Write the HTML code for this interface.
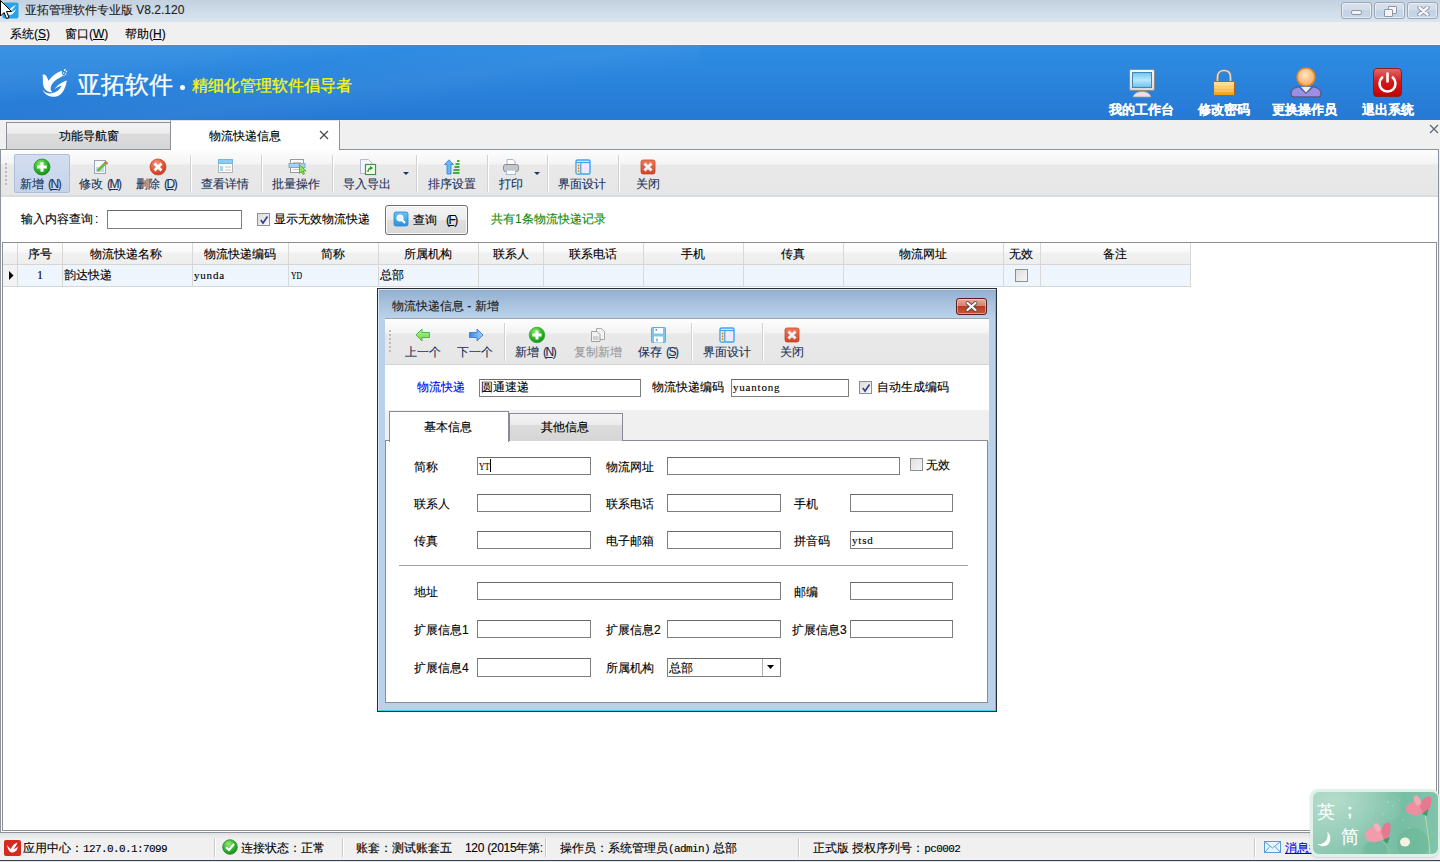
<!DOCTYPE html>
<html><head><meta charset="utf-8">
<style>
*{box-sizing:border-box;margin:0;padding:0}
html,body{width:1440px;height:862px;overflow:hidden;background:#f0f0f0;font-family:"Liberation Sans",sans-serif;font-size:12px;color:#000}
.a{position:absolute}
.t{position:absolute;white-space:nowrap;line-height:12px;font-size:12px;-webkit-text-stroke:0.12px currentColor}
#titlebar{left:0;top:0;width:1440px;height:22px;background:linear-gradient(#c3d1e0,#d9e5f1)}
#menubar{left:0;top:22px;width:1440px;height:23px;background:#f0f0f0}
#banner{left:0;top:45px;width:1440px;height:75px;background:linear-gradient(#2e8de3,#2679d4)}
#tabstrip{left:0;top:120px;width:1440px;height:30px;background:#f0f0f0}
#panel{left:0;top:149px;width:1439px;height:684px;border:1px solid #8e949c;border-top:1px solid #8e949c;background:#fff}
#toolbar{left:1px;top:150px;width:1437px;height:47px;background:linear-gradient(#fdfdfd 0,#f4f4f4 14px,#e9e9e9 15px,#e6e6e6 100%);border-bottom:2px solid #dadde0}
#grid{left:2px;top:242px;width:1435px;height:589px;border:1px solid #8f8f8f;background:#fff}
#status{left:0;top:833px;width:1440px;height:27px;background:linear-gradient(#e2e2e2,#f0f0f0 6px,#f0f0f0)}
#taskbar{left:0;top:860px;width:1440px;height:2px;background:linear-gradient(#3b4250 0,#3b4250 1px,#d8e4ef 1px)}
.wb{position:absolute;width:31px;height:17px;border:1px solid #9ba6b7;border-radius:3px;background:linear-gradient(#d6dfea 0,#d3dde9 45%,#c4d4e6 46%,#c6d6e8 100%);box-shadow:inset 0 0 0 1px rgba(255,255,255,.5)}
.bl{font-size:13px;line-height:13px;font-weight:bold;color:#fff}
.sep{position:absolute;width:1px;height:37px;background:#cfd2d6;box-shadow:1px 0 0 #fff}
.tb{color:#17325a}
.pn{margin-left:4px;letter-spacing:-1.5px;font-size:12px}
.inp{background:#fff;border:1px solid #7e7e7e;border-top-color:#6a6a6a}
.cb{position:absolute;width:13px;height:13px;border:1px solid #8e8f8f;background:linear-gradient(135deg,#dcdcdc,#f8f8f8)}
.gh{color:#000}
.mono{font-family:"Liberation Mono",monospace;font-size:11px;letter-spacing:-0.6px}
.ssep{position:absolute;top:838px;width:1px;height:19px;background:#c9c9c9;box-shadow:1px 0 0 #fff}
.ser{font-family:"Liberation Serif",serif;font-size:11px;letter-spacing:0.8px}
</style></head><body>
<div id="titlebar" class="a"></div>
<div id="menubar" class="a"></div><div class="a" style="left:0;top:44px;width:1440px;height:1px;background:#fbf7f2"></div>
<div id="banner" class="a"><div class="a" style="left:0;top:0;width:700px;height:75px;background:linear-gradient(172deg,rgba(255,255,255,0.05) 0,rgba(255,255,255,0.05) 20%,rgba(255,255,255,0) 35%,rgba(255,255,255,0.04) 55%,rgba(255,255,255,0) 70%)"></div></div>
<div id="tabstrip" class="a"></div>
<div id="panel" class="a"></div>
<div id="toolbar" class="a"></div>
<div id="grid" class="a"></div>
<div id="status" class="a"></div>
<div id="taskbar" class="a"></div>
<!-- TITLE BAR -->
<svg class="a" style="left:2px;top:2px" width="17" height="17" viewBox="0 0 17 17">
<rect x="0.5" y="0.5" width="16" height="16" rx="2" fill="#2aa2e6"/>
<path d="M3 7 C4 11 6 13 9 13 C11 12 13 10 14 7 C12 9 10 10 8 10 C10 8 12 6 14 3 C11 4 8 6 6 10 C5 9 4 8 3 7Z" fill="#fff" opacity="0.9"/>
</svg>
<svg class="a" style="left:0;top:0" width="13" height="20" viewBox="0 0 13 20">
<path d="M0.5 0.5 L0.5 16 L4 12.5 L6.5 18.5 L9 17.5 L6.5 11.5 L11.5 11.5 Z" fill="#fff" stroke="#000" stroke-width="1"/>
</svg>
<div class="t" style="left:25px;top:4px;color:#222;font-size:12px">亚拓管理软件专业版 V8.2.120</div>
<!-- window buttons -->
<div class="a wb" style="left:1341px;top:2px"><div class="a" style="left:9px;top:7px;width:11px;height:5px;background:#f4f4f4;border:1px solid #8c97a8;border-radius:2px"></div></div>
<div class="a wb" style="left:1374px;top:2px">
 <div class="a" style="left:13px;top:3px;width:9px;height:8px;background:#f4f4f4;border:1px solid #8c97a8;border-radius:1px"></div>
 <div class="a" style="left:9px;top:6px;width:9px;height:8px;background:#f4f4f4;border:1px solid #8c97a8;border-radius:1px"></div>
</div>
<div class="a wb" style="left:1407px;top:2px">
 <svg class="a" style="left:9px;top:3px" width="13" height="10" viewBox="0 0 13 10"><path d="M2.5 1.5 L10.5 8.5 M10.5 1.5 L2.5 8.5" stroke="#8c97a8" stroke-width="4.4" stroke-linecap="round"/><path d="M2.5 1.5 L10.5 8.5 M10.5 1.5 L2.5 8.5" stroke="#f6f6f6" stroke-width="2.6" stroke-linecap="round"/></svg>
</div>
<!-- MENU -->
<div class="t" style="left:10px;top:28px">系统(<u>S</u>)</div>
<div class="t" style="left:65px;top:28px">窗口(<u>W</u>)</div>
<div class="t" style="left:125px;top:28px">帮助(<u>H</u>)</div>

<!-- BANNER -->
<svg class="a" style="left:38px;top:64px" width="34" height="36" viewBox="0 0 34 36">
<path d="M4.6 11 C6 10 7.6 10.6 8.6 12.6 L10.6 16.8 C14 12 18 8.8 23.8 6.8 L24.2 12.6 C18.5 15 13.8 19 12.8 23 C12.2 25.5 13 27 14.5 28.2 C10 28.6 6.2 26 5.2 21 C4.6 17 5.2 13 4.6 11 Z" fill="#fff"/>
<path d="M4.4 25.2 C6 30 11 33.2 17 32.8 C23.5 32.2 27.6 25 28.8 16.4 C25 17.6 19.5 20.5 16.2 25.4 C19 23 22 21.6 23.4 22 C21.5 26.5 16.5 29.6 11.2 29.4 C8.2 29.2 6 27.6 4.4 25.2 Z" fill="#fff"/>
<circle cx="26.8" cy="6" r="0.9" fill="#fff"/><circle cx="28.4" cy="7.6" r="0.8" fill="#fff"/><circle cx="27.6" cy="10" r="0.8" fill="#fff"/><circle cx="25.6" cy="9" r="0.8" fill="#fff"/><circle cx="24.4" cy="11.2" r="0.7" fill="#fff"/><circle cx="26" cy="11.6" r="0.6" fill="#fff"/>
</svg>
<div class="t" style="left:77px;top:73px;font-size:24px;line-height:24px;color:#fff;font-weight:500;-webkit-text-stroke:0.3px #fff">亚拓软件</div>
<div class="a" style="left:180px;top:85px;width:5px;height:5px;border-radius:50%;background:#fff"></div>
<div class="t" style="left:192px;top:78px;font-size:16px;line-height:16px;color:#f8f800;-webkit-text-stroke:0.3px #f8f800">精细化管理软件倡导者</div>
<!-- monitor icon -->
<svg class="a" style="left:1128px;top:68px" width="28" height="30" viewBox="0 0 28 30">
<defs><linearGradient id="scr" x1="0" y1="0" x2="0" y2="1"><stop offset="0" stop-color="#6ec3f0"/><stop offset="0.5" stop-color="#b8e8fc"/><stop offset="1" stop-color="#6cc0ee"/></linearGradient>
<linearGradient id="frm" x1="0" y1="0" x2="0" y2="1"><stop offset="0" stop-color="#fafafa"/><stop offset="1" stop-color="#d8d8d8"/></linearGradient></defs>
<path d="M5 29 C6 25 10 23.5 14 23.5 C18 23.5 22 25 23 29 Z" fill="#e4e4e4" stroke="#9a9a9a" stroke-width="0.8"/>
<rect x="1.5" y="1.5" width="25" height="21" rx="1.5" fill="url(#frm)" stroke="#8d8d8d" stroke-width="1"/>
<rect x="4.5" y="4.5" width="19" height="15" fill="url(#scr)" stroke="#3f86b8" stroke-width="1"/>
</svg>
<!-- lock icon -->
<svg class="a" style="left:1212px;top:69px" width="24" height="28" viewBox="0 0 24 28">
<defs><linearGradient id="lk" x1="0" y1="0" x2="0" y2="1"><stop offset="0" stop-color="#ffe7a8"/><stop offset="0.5" stop-color="#ffc34a"/><stop offset="1" stop-color="#f39a10"/></linearGradient></defs>
<path d="M5.5 12 L5.5 8 C5.5 3.5 8.5 1.5 12 1.5 C15.5 1.5 18.5 3.5 18.5 8 L18.5 12" fill="none" stroke="#7b7b7b" stroke-width="3.2"/>
<path d="M5.5 12 L5.5 8 C5.5 3.5 8.5 1.5 12 1.5 C15.5 1.5 18.5 3.5 18.5 8 L18.5 12" fill="none" stroke="#dcdcdc" stroke-width="1.6"/>
<rect x="1.5" y="12.5" width="21" height="14" rx="1" fill="url(#lk)" stroke="#b0641a" stroke-width="1"/>
<path d="M3 16 H21 M3 19 H21 M3 22 H21" stroke="#ffe9b8" stroke-width="0.7" opacity="0.8"/>
</svg>
<!-- user icon -->
<svg class="a" style="left:1289px;top:66px" width="34" height="32" viewBox="0 0 34 32">
<defs><radialGradient id="hd" cx="0.45" cy="0.4" r="0.6"><stop offset="0" stop-color="#ffe6c6"/><stop offset="1" stop-color="#f8a85c"/></radialGradient></defs>
<path d="M2 28 C2 23 5 21.5 10 20.5 L17 27 L24 20.5 C29 21.5 32 23 32 28 C32 30 31 31 29 31 L5 31 C3 31 2 30 2 28 Z" fill="#9a8ee6" stroke="#5e5a86" stroke-width="1.4"/>
<path d="M12 21 L17 26.5 L22 21 Z" fill="#f0f0f0"/>
<circle cx="17" cy="11" r="9" fill="url(#hd)" stroke="#e0872a" stroke-width="1.6"/>
</svg>
<!-- power icon -->
<svg class="a" style="left:1372px;top:67px" width="31" height="31" viewBox="0 0 31 31">
<defs><linearGradient id="pw" x1="0" y1="0" x2="0" y2="1"><stop offset="0" stop-color="#e56a6a"/><stop offset="0.45" stop-color="#d41c1c"/><stop offset="1" stop-color="#c40000"/></linearGradient></defs>
<rect x="1.5" y="1.5" width="28" height="28" rx="3.5" fill="url(#pw)" stroke="#8a2020" stroke-width="1"/>
<path d="M10.2 10.5 A8 8 0 1 0 20.8 10.5" fill="none" stroke="#fff" stroke-width="2.6" stroke-linecap="round"/>
<path d="M15.5 6.5 V14.5" stroke="#fff" stroke-width="2.6" stroke-linecap="round"/>
</svg>
<div class="t bl" style="left:1109px;top:103px">我的工作台</div>
<div class="t bl" style="left:1198px;top:103px">修改密码</div>
<div class="t bl" style="left:1272px;top:103px">更换操作员</div>
<div class="t bl" style="left:1362px;top:103px">退出系统</div>

<!-- TABS -->
<div class="a" style="left:6px;top:122px;width:165px;height:27px;border:1px solid #8b8f97;border-bottom:none;background:linear-gradient(#f3f3f3 0,#ececec 40%,#dcdcdc 41%,#d6d6d6 100%)"></div>
<div class="t" style="left:59px;top:130px">功能导航窗</div>
<div class="a" style="left:170px;top:120px;width:170px;height:30px;border:1px solid #8b8f97;border-top:1px solid #dfe3e8;border-bottom:none;background:#fff"></div>
<div class="t" style="left:209px;top:130px">物流快递信息</div>
<svg class="a" style="left:319px;top:130px" width="10" height="10" viewBox="0 0 10 10"><path d="M1 1 L9 9 M9 1 L1 9" stroke="#4a4a4a" stroke-width="1.2"/></svg>
<svg class="a" style="left:1429px;top:124px" width="10" height="10" viewBox="0 0 10 10"><path d="M1 1 L9 9 M9 1 L1 9" stroke="#5b6778" stroke-width="1.2"/></svg>
<!-- TOOLBAR -->
<div class="a" style="left:5px;top:163px;width:2px;height:23px;background:repeating-linear-gradient(#b8bcc2 0,#b8bcc2 2px,transparent 2px,transparent 4px)"></div>
<div class="a" style="left:14px;top:154px;width:56px;height:39px;border:1px solid #aac0dc;border-radius:2px;background:linear-gradient(#d3deef,#c5d3ea)"></div>
<div class="sep" style="left:190px;top:155px"></div>
<div class="sep" style="left:261px;top:155px"></div>
<div class="sep" style="left:332px;top:155px"></div>
<div class="sep" style="left:416px;top:155px"></div>
<div class="sep" style="left:487px;top:155px"></div>
<div class="sep" style="left:547px;top:155px"></div>
<div class="sep" style="left:618px;top:155px"></div>
<!-- icons -->
<svg class="a" style="left:33px;top:158px" width="18" height="18" viewBox="0 0 18 18">
<defs><radialGradient id="gp" cx="0.4" cy="0.3" r="0.7"><stop offset="0" stop-color="#8ee86a"/><stop offset="0.6" stop-color="#2fb52c"/><stop offset="1" stop-color="#1b8f1b"/></radialGradient></defs>
<circle cx="9" cy="9" r="8" fill="url(#gp)" stroke="#1f8a1f" stroke-width="0.8"/>
<path d="M9 4.2 V13.8 M4.2 9 H13.8" stroke="#fff" stroke-width="3"/>
</svg>
<svg class="a" style="left:93px;top:159px" width="16" height="16" viewBox="0 0 16 16">
<rect x="1.5" y="1.5" width="11" height="13" fill="#fbfbfd" stroke="#9aa4b8" stroke-width="1"/>
<rect x="3" y="8" width="8" height="5" fill="#c9d6ef"/>
<path d="M4.5 12 L13 3.5" stroke="#5fbf3a" stroke-width="2.6"/>
<path d="M12 2.5 L14.5 5" stroke="#e46a50" stroke-width="2.4"/>
</svg>
<svg class="a" style="left:149px;top:158px" width="18" height="18" viewBox="0 0 18 18">
<defs><radialGradient id="rd" cx="0.4" cy="0.3" r="0.7"><stop offset="0" stop-color="#f7a08a"/><stop offset="0.6" stop-color="#e5563a"/><stop offset="1" stop-color="#c83a22"/></radialGradient></defs>
<circle cx="9" cy="9" r="8" fill="url(#rd)" stroke="#c84a30" stroke-width="0.8"/>
<path d="M5.5 5.5 L12.5 12.5 M12.5 5.5 L5.5 12.5" stroke="#fff" stroke-width="2.8"/>
</svg>
<svg class="a" style="left:217px;top:158px" width="17" height="16" viewBox="0 0 17 16">
<rect x="1.5" y="1.5" width="14" height="13" fill="#fdfdfd" stroke="#b3b3b3" stroke-width="1"/>
<rect x="1.5" y="1.5" width="14" height="4" fill="#8ccbf5" stroke="#6fb7ea" stroke-width="1"/>
<rect x="3" y="8" width="3" height="5" fill="#a8d3f2"/>
<path d="M8 9 H14 M8 12 H14" stroke="#c3c3c3" stroke-width="1"/>
</svg>
<svg class="a" style="left:288px;top:158px" width="19" height="17" viewBox="0 0 19 17">
<rect x="2.5" y="1.5" width="13" height="13" fill="#fafafa" stroke="#9a9a9a" stroke-width="1"/>
<path d="M5 4.5 H13 M5 11.5 H13" stroke="#c4c4c4" stroke-width="1"/>
<rect x="1" y="5.5" width="16" height="4" fill="#9fd3f7" stroke="#68b3e6" stroke-width="1"/>
<path d="M11.5 6.5 L11.5 15.5 L13.5 13.5 L15 16.5 L16.5 15.8 L15.2 13 L18 13 Z" fill="#8ee15a" stroke="#4aa82a" stroke-width="0.8"/>
</svg>
<svg class="a" style="left:359px;top:158px" width="18" height="18" viewBox="0 0 18 18">
<path d="M1.5 1.5 H9.5 L13 5 V15.5 H1.5 Z" fill="#f4f4fd" stroke="#b5b9d8" stroke-width="1"/>
<rect x="6.5" y="6.5" width="10" height="10" fill="#fafff5" stroke="#3c9a34" stroke-width="1.2"/>
<path d="M9 14 C9 11 10 10 12.5 10 M11 8.5 L13 10 L11 11.5" fill="none" stroke="#3c9a34" stroke-width="1.4"/>
</svg>
<svg class="a" style="left:443px;top:159px" width="18" height="16" viewBox="0 0 18 16">
<path d="M6 0.8 L10.5 5.5 H8 V15 H4 V5.5 H1.5 Z" fill="#6ab8f2" stroke="#2f82d0" stroke-width="0.8"/>
<path d="M10 14 H16.5 M10.5 11 H16.5 M11.5 8 H16.5 M12.5 5 H16.5 M14 2 H16.5" stroke="#3fae3a" stroke-width="2"/>
</svg>
<svg class="a" style="left:502px;top:158px" width="18" height="18" viewBox="0 0 18 18">
<path d="M5 1.5 H11 L13 3.5 V7 H5 Z" fill="#fdfdfd" stroke="#9fb6d6" stroke-width="1"/>
<rect x="1.5" y="6.5" width="15" height="7" rx="2" fill="#c7c7c7" stroke="#8a8a8a" stroke-width="1"/>
<rect x="4.5" y="12" width="9" height="4.5" fill="#fdfdfd" stroke="#a8bcd8" stroke-width="1"/>
</svg>
<svg class="a" style="left:575px;top:159px" width="16" height="16" viewBox="0 0 16 16">
<rect x="1" y="1" width="14" height="14" rx="1.5" fill="#efeaff" stroke="#3aa6ee" stroke-width="1.4"/>
<path d="M1 3.5 H15" stroke="#3aa6ee" stroke-width="1.2"/>
<rect x="1.8" y="4.5" width="3.7" height="9.8" fill="#f9e58a"/>
<path d="M5.8 4 V15" stroke="#3aa6ee" stroke-width="1.2"/>
<circle cx="3.6" cy="6.5" r="0.8" fill="#e85a3a"/><circle cx="3.6" cy="9.3" r="0.8" fill="#e85a3a"/><circle cx="3.6" cy="12" r="0.8" fill="#e85a3a"/>
</svg>
<svg class="a" style="left:640px;top:159px" width="16" height="16" viewBox="0 0 16 16">
<defs><linearGradient id="cx" x1="0" y1="0" x2="0" y2="1"><stop offset="0" stop-color="#f07a5a"/><stop offset="1" stop-color="#d2442a"/></linearGradient></defs>
<rect x="1" y="1" width="14" height="14" rx="2" fill="url(#cx)" stroke="#c0442c" stroke-width="0.8"/>
<path d="M4.5 4.5 L11.5 11.5 M11.5 4.5 L4.5 11.5" stroke="#eef3f5" stroke-width="3"/>
</svg>
<svg class="a" style="left:403px;top:172px" width="6" height="3" viewBox="0 0 6 3"><path d="M0 0 H6 L3 3 Z" fill="#1d3557"/></svg>
<svg class="a" style="left:534px;top:172px" width="6" height="3" viewBox="0 0 6 3"><path d="M0 0 H6 L3 3 Z" fill="#1d3557"/></svg>
<!-- toolbar labels -->
<div class="t tb" style="left:20px;top:178px">新增<span class="pn">(<u>N</u>)</span></div>
<div class="t tb" style="left:79px;top:178px">修改<span class="pn">(<u>M</u>)</span></div>
<div class="t tb" style="left:136px;top:178px">删除<span class="pn">(<u>D</u>)</span></div>
<div class="t tb" style="left:201px;top:178px">查看详情</div>
<div class="t tb" style="left:272px;top:178px">批量操作</div>
<div class="t tb" style="left:343px;top:178px">导入导出</div>
<div class="t tb" style="left:428px;top:178px">排序设置</div>
<div class="t tb" style="left:499px;top:178px">打印</div>
<div class="t tb" style="left:558px;top:178px">界面设计</div>
<div class="t tb" style="left:636px;top:178px">关闭</div>

<!-- SEARCH ROW -->
<div class="t" style="left:21px;top:213px">输入内容查询<span style="margin-left:2px">:</span></div>
<div class="a inp" style="left:107px;top:210px;width:135px;height:19px"></div>
<div class="a cb" style="left:257px;top:213px"><svg class="a" style="left:1px;top:1px" width="10" height="10" viewBox="0 0 10 10"><path d="M1.8 5 L4 8 L8.5 1.5" fill="none" stroke="#2f3f8f" stroke-width="1.6"/></svg></div>
<div class="t" style="left:274px;top:213px">显示无效物流快递</div>
<div class="a" style="left:385px;top:205px;width:83px;height:30px;border:1px solid #707070;border-radius:3px;background:linear-gradient(#f4f4f4 0,#ececec 50%,#dedede 51%,#d8d8d8 100%);box-shadow:inset 0 0 0 1px #fafafa"></div>
<svg class="a" style="left:393px;top:211px" width="16" height="16" viewBox="0 0 16 16">
<defs><linearGradient id="sg" x1="0" y1="0" x2="0" y2="1"><stop offset="0" stop-color="#6cc4f6"/><stop offset="1" stop-color="#2a90dc"/></linearGradient></defs>
<rect x="1" y="1" width="14" height="14" rx="2" fill="url(#sg)" stroke="#2a86d0" stroke-width="0.8"/>
<circle cx="7" cy="7" r="3" fill="#e8f6ff" stroke="#fff" stroke-width="1.2"/>
<path d="M9 9 L12 12" stroke="#fff" stroke-width="2"/>
</svg>
<div class="t" style="left:413px;top:214px">查询<span class="pn" style="margin-left:9px">(<u>F</u>)</span></div>
<div class="t" style="left:491px;top:213px;color:#0a8a0a">共有1条物流快递记录</div>
<!-- GRID -->
<div class="a" style="left:3px;top:243px;width:1188px;height:22px;background:linear-gradient(#fdfdfd 0,#f9f9f9 9px,#f1f1f1 10px,#eeeeee 100%);border-bottom:1px solid #d5d5d5"></div>
<div class="a" style="left:17px;top:265px;width:1174px;height:22px;background:#eef5fd;border-bottom:1px solid #d5d5d5"></div>
<div class="a" style="left:3px;top:265px;width:14px;height:22px;background:#f3f3f3;border-bottom:1px solid #d5d5d5"></div>
<div class="a" style="left:17px;top:243px;width:1px;height:44px;background:#d8d8d8"></div><div class="a" style="left:62px;top:243px;width:1px;height:44px;background:#d8d8d8"></div><div class="a" style="left:192px;top:243px;width:1px;height:44px;background:#d8d8d8"></div><div class="a" style="left:288px;top:243px;width:1px;height:44px;background:#d8d8d8"></div><div class="a" style="left:378px;top:243px;width:1px;height:44px;background:#d8d8d8"></div><div class="a" style="left:478px;top:243px;width:1px;height:44px;background:#d8d8d8"></div><div class="a" style="left:543px;top:243px;width:1px;height:44px;background:#d8d8d8"></div><div class="a" style="left:643px;top:243px;width:1px;height:44px;background:#d8d8d8"></div><div class="a" style="left:743px;top:243px;width:1px;height:44px;background:#d8d8d8"></div><div class="a" style="left:843px;top:243px;width:1px;height:44px;background:#d8d8d8"></div><div class="a" style="left:1003px;top:243px;width:1px;height:44px;background:#d8d8d8"></div><div class="a" style="left:1040px;top:243px;width:1px;height:44px;background:#d8d8d8"></div><div class="a" style="left:1190px;top:243px;width:1px;height:44px;background:#d8d8d8"></div>
<svg class="a" style="left:9px;top:271px" width="5" height="9" viewBox="0 0 5 9"><path d="M0 0 L4.5 4.5 L0 9 Z" fill="#000"/></svg>
<div class="t gh" style="left:28px;top:248px">序号</div>
<div class="t gh" style="left:90px;top:248px">物流快递名称</div>
<div class="t gh" style="left:204px;top:248px">物流快递编码</div>
<div class="t gh" style="left:321px;top:248px">简称</div>
<div class="t gh" style="left:404px;top:248px">所属机构</div>
<div class="t gh" style="left:493px;top:248px">联系人</div>
<div class="t gh" style="left:569px;top:248px">联系电话</div>
<div class="t gh" style="left:681px;top:248px">手机</div>
<div class="t gh" style="left:781px;top:248px">传真</div>
<div class="t gh" style="left:899px;top:248px">物流网址</div>
<div class="t gh" style="left:1009px;top:248px">无效</div>
<div class="t gh" style="left:1103px;top:248px">备注</div>
<div class="t" style="left:37px;top:269px;font-family:'Liberation Serif',serif">1</div>
<div class="t" style="left:64px;top:269px">韵达快递</div>
<div class="t ser" style="left:194px;top:269px">yunda</div>
<div class="t ser" style="left:291px;top:269px;transform:scaleX(0.7);transform-origin:0 0;letter-spacing:0">YD</div>
<div class="t" style="left:380px;top:269px">总部</div>
<div class="a cb" style="left:1015px;top:269px;background:linear-gradient(135deg,#dedede,#f7f7f7)"></div>

<!-- DIALOG -->
<div class="a" style="left:377px;top:288px;width:620px;height:424px;border:1px solid #2a2d33;background:#b9d1ea"></div>
<div class="a" style="left:378px;top:289px;width:618px;height:422px;border:1px solid #d6e6f5;border-right-color:#3ad0f0;border-bottom-color:#3ad0f0;background:linear-gradient(#93afd0 0,#a6c0dd 12px,#bbd2ea 28px,#b9d1ea 30px)"></div>
<div class="t" style="left:392px;top:300px;color:#1b1b1b">物流快递信息 - 新增</div>
<div class="a" style="left:956px;top:298px;width:31px;height:17px;border:1px solid #5e1c1c;border-radius:3px;background:linear-gradient(#eba89a 0,#d98070 45%,#b73d22 50%,#c8553a 100%);box-shadow:inset 0 0 0 1px rgba(255,220,210,.5)"></div>
<svg class="a" style="left:963px;top:300px" width="17" height="13" viewBox="0 0 17 13"><path d="M4.5 3 L12.5 10 M12.5 3 L4.5 10" stroke="#5a4646" stroke-width="3.8" stroke-linecap="round"/><path d="M4.5 3 L12.5 10 M12.5 3 L4.5 10" stroke="#fafafa" stroke-width="2.2" stroke-linecap="round"/></svg>
<!-- dialog body -->
<div class="a" style="left:385px;top:318px;width:604px;height:47px;background:linear-gradient(#fefefe 0,#f3f3f3 14px,#e9e9e9 15px,#e6e6e6 100%);border-top:1px solid #a0a6ae;border-bottom:1px solid #d0d4d8"></div>
<div class="a" style="left:385px;top:365px;width:604px;height:45px;background:#fff"></div>
<div class="a" style="left:385px;top:410px;width:604px;height:31px;background:#f0f0f0"></div>
<div class="a" style="left:385px;top:440px;width:603px;height:263px;border:1px solid #898c95;background:#fff"></div>
<div class="a" style="left:389px;top:330px;width:2px;height:24px;background:repeating-linear-gradient(#b8bcc2 0,#b8bcc2 2px,transparent 2px,transparent 4px)"></div>
<div class="sep" style="left:504px;top:323px;height:38px"></div>
<div class="sep" style="left:691px;top:323px;height:38px"></div>
<div class="sep" style="left:762px;top:323px;height:38px"></div>
<svg class="a" style="left:415px;top:328px" width="16" height="14" viewBox="0 0 16 14">
<defs><linearGradient id="ga" x1="0" y1="0" x2="0" y2="1"><stop offset="0" stop-color="#b8f29a"/><stop offset="1" stop-color="#6cd04a"/></linearGradient></defs>
<path d="M1 7 L7 1 V4.5 H14.5 V9.5 H7 V13 Z" fill="url(#ga)" stroke="#4caf3a" stroke-width="0.9"/>
</svg>
<svg class="a" style="left:468px;top:328px" width="16" height="14" viewBox="0 0 16 14">
<defs><linearGradient id="ba" x1="0" y1="0" x2="1" y2="0"><stop offset="0" stop-color="#3b8ae0"/><stop offset="1" stop-color="#a0d0fa"/></linearGradient></defs>
<path d="M15 7 L9 1 V4.5 H1.5 V9.5 H9 V13 Z" fill="url(#ba)" stroke="#3a7cd0" stroke-width="0.9"/>
</svg>
<svg class="a" style="left:528px;top:326px" width="18" height="18" viewBox="0 0 18 18">
<circle cx="9" cy="9" r="7.8" fill="url(#gp)" stroke="#3aaa3a" stroke-width="0.8"/>
<path d="M9 4.4 V13.6 M4.4 9 H13.6" stroke="#fff" stroke-width="3"/>
</svg>
<svg class="a" style="left:590px;top:327px" width="16" height="16" viewBox="0 0 16 16">
<path d="M6.5 1.5 H11.5 L14.5 4.5 V12.5 H6.5 Z" fill="#f2f2f2" stroke="#a8a8a8" stroke-width="1"/>
<path d="M1.5 4.5 H7 L10 7.5 V14.5 H1.5 Z" fill="#f2f2f2" stroke="#a0a0a0" stroke-width="1"/>
<rect x="3" y="9" width="5.5" height="4" fill="#cfcfcf"/>
</svg>
<svg class="a" style="left:651px;top:327px" width="15" height="16" viewBox="0 0 15 16">
<rect x="0.5" y="0.5" width="14" height="15" rx="1" fill="#7ec4ef" stroke="#5aaee0" stroke-width="1"/>
<rect x="3" y="1" width="9" height="5.5" fill="#fff"/>
<rect x="4.5" y="2" width="1.6" height="1.6" fill="#3d8fd0"/>
<rect x="3" y="9.5" width="9" height="6" fill="#fff"/>
<rect x="5" y="11.5" width="2" height="3" fill="#7ec4ef"/>
</svg>
<svg class="a" style="left:719px;top:327px" width="16" height="16" viewBox="0 0 16 16">
<rect x="1" y="1" width="14" height="14" rx="1.5" fill="#efeaff" stroke="#3aa6ee" stroke-width="1.4"/>
<path d="M1 3.5 H15" stroke="#3aa6ee" stroke-width="1.2"/>
<rect x="1.8" y="4.5" width="3.7" height="9.8" fill="#f9e58a"/>
<path d="M5.8 4 V15" stroke="#3aa6ee" stroke-width="1.2"/>
<circle cx="3.6" cy="6.5" r="0.8" fill="#e85a3a"/><circle cx="3.6" cy="9.3" r="0.8" fill="#e85a3a"/><circle cx="3.6" cy="12" r="0.8" fill="#e85a3a"/>
</svg>
<svg class="a" style="left:784px;top:327px" width="16" height="16" viewBox="0 0 16 16">
<rect x="1" y="1" width="14" height="14" rx="2" fill="url(#cx)" stroke="#c0442c" stroke-width="0.8"/>
<path d="M4.5 4.5 L11.5 11.5 M11.5 4.5 L4.5 11.5" stroke="#eef3f5" stroke-width="3"/>
</svg>
<div class="t tb" style="left:405px;top:346px">上一个</div>
<div class="t tb" style="left:457px;top:346px">下一个</div>
<div class="t tb" style="left:515px;top:346px">新增<span class="pn">(<u>N</u>)</span></div>
<div class="t" style="left:574px;top:346px;color:#9a9a9a">复制新增</div>
<div class="t tb" style="left:638px;top:346px">保存<span class="pn">(<u>S</u>)</span></div>
<div class="t tb" style="left:703px;top:346px">界面设计</div>
<div class="t tb" style="left:780px;top:346px">关闭</div>
<!-- header fields -->
<div class="t" style="left:417px;top:381px;color:#0000ff">物流快递</div>
<div class="a inp" style="left:479px;top:379px;width:162px;height:18px"></div>
<div class="t" style="left:481px;top:381px">圆通速递</div>
<div class="t" style="left:652px;top:381px">物流快递编码</div>
<div class="a inp" style="left:731px;top:379px;width:118px;height:18px"></div>
<div class="t ser" style="left:733px;top:381px">yuantong</div>
<div class="a cb" style="left:859px;top:381px"><svg class="a" style="left:1px;top:1px" width="10" height="10" viewBox="0 0 10 10"><path d="M1.8 5 L4 8 L8.5 1.5" fill="none" stroke="#2f3f8f" stroke-width="1.6"/></svg></div>
<div class="t" style="left:877px;top:381px">自动生成编码</div>
<!-- tabs -->
<div class="a" style="left:509px;top:413px;width:114px;height:28px;border:1px solid #898c95;border-bottom:none;background:linear-gradient(#f3f3f3 0,#ececec 40%,#dcdcdc 41%,#d6d6d6 100%)"></div>
<div class="a" style="left:389px;top:411px;width:120px;height:31px;border:1px solid #898c95;border-bottom:none;background:#fff"></div>
<div class="t" style="left:424px;top:421px">基本信息</div>
<div class="t" style="left:541px;top:421px">其他信息</div>
<!-- form -->
<div class="t" style="left:414px;top:461px">简称</div>
<div class="a inp" style="left:477px;top:457px;width:114px;height:18px"></div>
<div class="t ser" style="left:479px;top:460px;transform:scaleX(0.72);transform-origin:0 0;letter-spacing:0">YT</div>
<div class="a" style="left:490px;top:459px;width:1px;height:13px;background:#000"></div>
<div class="t" style="left:606px;top:461px">物流网址</div>
<div class="a inp" style="left:667px;top:457px;width:233px;height:18px"></div>
<div class="a cb" style="left:910px;top:458px;background:linear-gradient(135deg,#dedede,#f7f7f7)"></div>
<div class="t" style="left:926px;top:459px">无效</div>

<div class="t" style="left:414px;top:498px">联系人</div>
<div class="a inp" style="left:477px;top:494px;width:114px;height:18px"></div>
<div class="t" style="left:606px;top:498px">联系电话</div>
<div class="a inp" style="left:667px;top:494px;width:114px;height:18px"></div>
<div class="t" style="left:794px;top:498px">手机</div>
<div class="a inp" style="left:850px;top:494px;width:103px;height:18px"></div>

<div class="t" style="left:414px;top:535px">传真</div>
<div class="a inp" style="left:477px;top:531px;width:114px;height:18px"></div>
<div class="t" style="left:606px;top:535px">电子邮箱</div>
<div class="a inp" style="left:667px;top:531px;width:114px;height:18px"></div>
<div class="t" style="left:794px;top:535px">拼音码</div>
<div class="a inp" style="left:850px;top:531px;width:103px;height:18px"></div>
<div class="t ser" style="left:852px;top:534px">ytsd</div>

<div class="a" style="left:399px;top:565px;width:569px;height:1px;background:#a0a0a0"></div>

<div class="t" style="left:414px;top:586px">地址</div>
<div class="a inp" style="left:477px;top:582px;width:304px;height:18px"></div>
<div class="t" style="left:794px;top:586px">邮编</div>
<div class="a inp" style="left:850px;top:582px;width:103px;height:18px"></div>

<div class="t" style="left:414px;top:624px">扩展信息1</div>
<div class="a inp" style="left:477px;top:620px;width:114px;height:18px"></div>
<div class="t" style="left:606px;top:624px">扩展信息2</div>
<div class="a inp" style="left:667px;top:620px;width:114px;height:18px"></div>
<div class="t" style="left:792px;top:624px">扩展信息3</div>
<div class="a inp" style="left:850px;top:620px;width:103px;height:18px"></div>

<div class="t" style="left:414px;top:662px">扩展信息4</div>
<div class="a inp" style="left:477px;top:658px;width:114px;height:19px"></div>
<div class="t" style="left:606px;top:662px">所属机构</div>
<div class="a inp" style="left:667px;top:658px;width:114px;height:19px"></div>
<div class="t" style="left:669px;top:662px">总部</div>
<div class="a" style="left:762px;top:659px;width:1px;height:17px;background:#b0b0b0"></div>
<svg class="a" style="left:767px;top:665px" width="8" height="4" viewBox="0 0 8 4"><path d="M0 0 H7 L3.5 4 Z" fill="#000"/></svg>

<!-- STATUS BAR -->
<svg class="a" style="left:4px;top:840px" width="17" height="16" viewBox="0 0 17 16">
<rect x="0" y="0" width="17" height="16" rx="2" fill="#d42a22"/>
<path d="M3 5 C4 10 5.5 12.5 9 12.5 C11.5 12 13.5 10 14 6.5 C12.5 8 11 8.8 9.5 9 C11 7.5 12.5 5.5 13.5 2.5 C10.5 3.5 8 5.5 7 9 C5.5 8 4 6.5 3 5Z" fill="#fff"/>
</svg>
<div class="t" style="left:23px;top:842px">应用中心：</div>
<div class="t mono" style="left:83px;top:843px">127.0.0.1:7099</div>
<div class="ssep" style="left:214px"></div>
<svg class="a" style="left:222px;top:839px" width="16" height="16" viewBox="0 0 16 16">
<defs><radialGradient id="ck" cx="0.4" cy="0.3" r="0.7"><stop offset="0" stop-color="#9be87a"/><stop offset="0.6" stop-color="#33b533"/><stop offset="1" stop-color="#1d8d1d"/></radialGradient></defs>
<circle cx="8" cy="8" r="7.3" fill="url(#ck)" stroke="#1f8a1f" stroke-width="0.8"/>
<path d="M4 8.2 L7 11 L12 5" fill="none" stroke="#fff" stroke-width="2.2"/>
</svg>
<div class="t" style="left:241px;top:842px">连接状态：正常</div>
<div class="ssep" style="left:342px"></div>
<div class="t" style="left:356px;top:842px">账套：测试账套五</div>
<div class="t" style="left:465px;top:842px;letter-spacing:-0.3px">120 (2015年第:</div>
<div class="ssep" style="left:545px"></div>
<div class="t" style="left:560px;top:842px">操作员：系统管理员<span class="mono" style="font-size:11px">(admin)</span> 总部</div>
<div class="ssep" style="left:798px"></div>
<div class="t" style="left:813px;top:842px">正式版 授权序列号：<span class="mono">pc0002</span></div>
<div class="ssep" style="left:1254px"></div>
<svg class="a" style="left:1264px;top:841px" width="17" height="12" viewBox="0 0 17 12"><rect x="0.5" y="0.5" width="16" height="11" fill="#eaf4fc" stroke="#5b9ad8"/><path d="M0.5 0.5 L8.5 7 L16.5 0.5 M0.5 11.5 L6 5.5 M16.5 11.5 L11 5.5" fill="none" stroke="#5b9ad8"/></svg>
<div class="t" style="left:1285px;top:842px;color:#0000ee;text-decoration:underline">消息提醒</div>
<!-- IME -->
<div class="a" style="left:1310px;top:789px;width:129px;height:68px;border-radius:8px;background:#dff1e9;box-shadow:0 1px 2px rgba(0,0,0,.12)"></div>
<div class="a" style="left:1313px;top:792px;width:125px;height:62px;border-radius:6px;overflow:hidden;background:radial-gradient(ellipse 70px 50px at 20px 8px,#b4dccb 0,rgba(150,205,185,0) 100%),linear-gradient(95deg,#95ccb8 0,#84c4ad 40%,#78bea4 70%,#80c4ab 100%)">
 <svg class="a" style="left:0;top:0" width="125" height="62" viewBox="0 0 125 62">
  <circle cx="100" cy="52" r="16" fill="#5aae88" opacity="0.3"/>
  <circle cx="62" cy="60" r="12" fill="#5aae88" opacity="0.3"/>
  <circle cx="78" cy="18" r="10" fill="#a4d4c0" opacity="0.15"/>
  <path d="M112 22 C114 34 116 48 117 62" stroke="#b9dda0" stroke-width="1" fill="none"/>
  <path d="M72 50 C74 54 76 58 77 62" stroke="#8cc890" stroke-width="1" fill="none"/>
  <path d="M95 13 C99 9 105 9 109 14 L110 21 C104 24 98 24 94 20 C92 17 93 15 95 13Z" fill="#ee8fa0"/>
  <path d="M107 15 C109 6 114 3 118 5 C119 12 117 19 111 23 Z" fill="#e6788f"/>
  <path d="M101 4 C104 3 108 5 108 12 L104 14 C101 10 100 7 101 4Z" fill="#f3a8b4"/>
  <path d="M109 22 L115 17 L114 24Z" fill="#3f9b6a"/>
  <path d="M53 40 C57 34 64 34 70 39 L71 47 C65 51 58 51 54 48 C51 45 51 42 53 40Z" fill="#f09cab"/>
  <path d="M68 40 C69 33 73 29 77 31 C79 38 76 46 72 50 Z" fill="#e37a90"/>
  <path d="M61 32 C64 30 67 32 68 38 L65 40 C62 37 60 35 61 32Z" fill="#f5b0bb"/>
  <path d="M70 48 L77 45 L74 52Z" fill="#3f9b6a"/>
  <ellipse cx="92" cy="50" rx="5" ry="4.5" fill="#f4f2df"/>
  <g fill="#d8eee6" opacity="0.7"><circle cx="75" cy="10" r="0.7"/><circle cx="80" cy="14" r="0.6"/><circle cx="86" cy="8" r="0.6"/><circle cx="70" cy="22" r="0.6"/><circle cx="90" cy="28" r="0.7"/><circle cx="96" cy="36" r="0.6"/><circle cx="60" cy="18" r="0.5"/></g>
 </svg>
 <div class="t" style="left:4px;top:11px;font-size:18px;line-height:18px;color:#fff">英</div>
 <div class="t" style="left:34px;top:10px;font-size:16px;line-height:18px;color:#fff;font-weight:bold">;</div>
 <svg class="a" style="left:4px;top:39px" width="15" height="16" viewBox="0 0 15 16"><path d="M10 0.5 C14 3.5 14.5 10 11 13.5 C8 16 3 15.5 0.5 13 C5.5 13.5 9 11 10.3 7 C11 4.8 10.8 2.5 10 0.5Z" fill="#fff"/></svg>
 <div class="t" style="left:28px;top:36px;font-size:18px;line-height:18px;color:#fff">简</div>
</div>
</body></html>
